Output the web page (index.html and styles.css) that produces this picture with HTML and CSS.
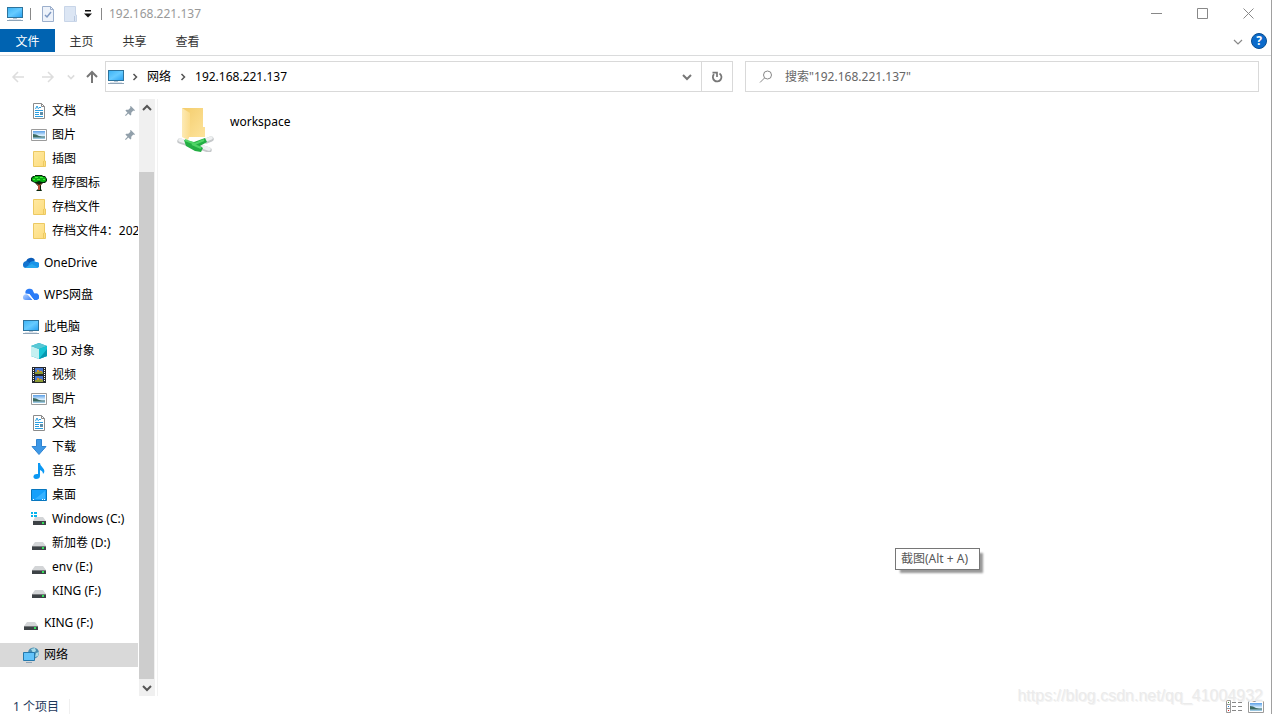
FILE: index.html
```html
<!DOCTYPE html>
<html lang="zh-CN">
<head>
<meta charset="utf-8">
<title>192.168.221.137</title>
<link rel="stylesheet" href="styles.css">
</head>
<body>
<svg class="sprite" aria-hidden="true">
  <defs>
    <linearGradient id="g-screen" x1="0" y1="0" x2="1" y2="1"><stop offset="0" stop-color="#3fb4f5"/><stop offset=".5" stop-color="#66cbff"/><stop offset="1" stop-color="#2ba3f2"/></linearGradient>
    <linearGradient id="g-folder" x1="0" y1="0" x2="1" y2="1"><stop offset="0" stop-color="#ffe9a2"/><stop offset="1" stop-color="#fddc7c"/></linearGradient>
    <linearGradient id="g-flap" x1="0" y1="0" x2="1" y2="0"><stop offset="0" stop-color="#fdeab5"/><stop offset="1" stop-color="#fbdc8c"/></linearGradient>
    <linearGradient id="g-back" x1="0" y1="0" x2="1" y2="1"><stop offset="0" stop-color="#f4cd6c"/><stop offset="1" stop-color="#fde39c"/></linearGradient>
    <linearGradient id="g-sky" x1="0" y1="0" x2="0" y2="1"><stop offset="0" stop-color="#5b9fe6"/><stop offset=".55" stop-color="#d9efff"/><stop offset="1" stop-color="#8fc0dc"/></linearGradient>
    <linearGradient id="g-wps" x1="0" y1="0" x2="1" y2="1"><stop offset="0" stop-color="#b5d3ff"/><stop offset="1" stop-color="#3d83f8"/></linearGradient>
  </defs>
  <symbol id="pc" viewBox="0 0 16 16"><path d="M0 1h16v11H0z" fill="#2d739c"/><path d="M1 2h14v9H1z" fill="url(#g-screen)"/><path d="M6 12h4v1H6z" fill="#b8c6d4"/><path d="M2 13h12v1H2z" fill="#dce4ec"/><path d="M0 14h16v1H0z" fill="#8fa4b8"/></symbol>
  <symbol id="folder" viewBox="0 0 16 16"><path d="M2.500.500h11V10h1v5.500h-12z" fill="url(#g-folder)" stroke="#ecc962"/><path d="M12.500 10v5.500" stroke="#ecc962" fill="none"/></symbol>
  <symbol id="doc" viewBox="0 0 16 16"><path d="M2.500.500h8l3 3v12h-11z" fill="#fff" stroke="#8b8b8b"/><path d="M10.500.500v3h3" fill="none" stroke="#8b8b8b"/><path d="M4.500 6l1.500-3 1.500 3M8 4.500h2M4 7.500h8M4 9.500h4M4 11.500h4M4 13.500h8" fill="none" stroke="#2a9ee0"/><path d="M9 9h3v3H9z" fill="#5d8da8"/></symbol>
  <symbol id="pic" viewBox="0 0 16 16"><path d="M.500 2.500h15v11H.500z" fill="#fff" stroke="#9b9b9b"/><path d="M2 4h12v8H2z" fill="url(#g-sky)"/><path d="M2 7q3 0 6 2 3 .500 6 .500v1H2z" fill="#3d6b62"/></symbol>
  <symbol id="pin" viewBox="0 0 12 12"><path d="M7 0l5 5-1 1-1-.500L7.500 8v2.500l-1 1L4 9l-3 3-1-1 3-3L.500 5.500l1-1H4L6.500 2 6 1z" fill="#92a0ab"/></symbol>
  <symbol id="tree" viewBox="0 0 16 16"><path d="M4 0h7l1 1h2l2 3v2l-2 2h-2l-2 2v4l1 2H5l2-2v-3L4 8 2 7 0 6V3l2-2h2z" fill="#06230a"/><path d="M4 1h7l1 1h2l1 2v2l-2 1h-2L8 6 5 7H3L1 5V3l2-1z" fill="#08ae14"/><path d="M4 2h3v1H4zM9 2h3v1H9zM6 4h3v1H6zM12 4h2v1h-2zM2 4h2v1H2z" fill="#4bea3c"/><path d="M5 8l3 2 3-2-2 3v4H7v-4z" fill="#b54a35"/></symbol>
  <symbol id="onedrive" viewBox="0 0 16 16"><path d="M3 7a5 5 0 0 1 9-2L8 10z" fill="#0a5cb8"/><path d="M0 10a3.500 3.500 0 0 1 5-3.500l6 6.500H3a3 3 0 0 1-3-3z" fill="#1374cf"/><path d="M6 9a4.500 4.500 0 0 1 7-2 3 3 0 0 1 1 6H4z" fill="#1893e8"/><path d="M2 12.500L9 9l6 3.500-1 .500H3z" fill="#29a8ee"/></symbol>
  <symbol id="wps" viewBox="0 0 16 16"><path d="M2.500 6.500a4 4 0 0 1 8-1.500l1 1.500a3.200 3.200 0 0 1 2.500 6.500h-3L6.500 7z" fill="#2a7cf7"/><path d="M0 10.500A3 3 0 0 1 5 8l4.500 5H2.500A2.500 2.500 0 0 1 0 10.500z" fill="url(#g-wps)"/><path d="M5.500 7l5.500 6.500" stroke="#fff"/></symbol>
  <symbol id="cube" viewBox="0 0 16 16"><path d="M8 0l8 3v10l-8 3-8-3V3z" fill="#14a5bd"/><path d="M0 3l8 3v10l-8-3z" fill="#c4f0f1"/><path d="M0 3l8-3 8 3-8 3z" fill="#58c8d5"/><path d="M8 6l8-3v10l-8 3z" fill="#17c4d4"/><path d="M8 16l8-10v7z" fill="#0798b0"/></symbol>
  <symbol id="video" viewBox="0 0 16 16"><path d="M1 0h14v16H1z" fill="#24282d"/><path d="M4 1h8v6H4zM4 9h8v6H4z" fill="#4a78d0"/><path d="M4 5h2l1-1h2l2 1h1v2H4zM4 13h2l1-1h2l2 1h1v2H4z" fill="#8c9a35"/><path d="M6 3h2v2H6zM9 4h2v1H9zM6 11h2v2H6zM9 12h2v1H9z" fill="#d99425"/><path d="M2.500 1v14M13.500 1v14" stroke="#fff" stroke-dasharray="1 1"/></symbol>
  <symbol id="down" viewBox="0 0 16 16"><path d="M5.500.500h5v7h4.500L8 15.500 1 7.500h4.500z" fill="#3e98e6" stroke="#2f84d2"/></symbol>
  <symbol id="music" viewBox="0 0 16 16"><path d="M7 0h2q0 2.500 2.500 4.500Q15 8 12 11q0-3-3-4v6q0 3-4 3-3-.500-2.500-3Q3 10.500 7 11z" fill="#0b98f3"/></symbol>
  <symbol id="desk" viewBox="0 0 16 16"><path d="M.500 2.500h15v11H.500z" fill="#16a0fb" stroke="#0876be"/><path d="M4 12L14 4v8z" fill="#37b2ff"/><path d="M2 12.500h1M11 12.500h1M13 12.500h1" stroke="#fff"/></symbol>
  <symbol id="drive" viewBox="0 0 16 16"><path d="M4 7h8l3 4H1z" fill="#d3d5d7"/><path d="M1 11h14v4H1z" fill="#3d4246"/><path d="M1 11h14v1H1z" fill="#76797c"/><path d="M11 12h2v2h-2z" fill="#32df58"/></symbol>
  <symbol id="windrive" viewBox="0 0 16 16"><path d="M4 6h8l3 4H2z" fill="#d3d5d7"/><path d="M2 10h13v4H2z" fill="#3d4246"/><path d="M11 11h2v2h-2z" fill="#32df58"/><path d="M0 1h2v2H0zM3 1h3v2H3zM0 4h2v2H0zM3 4h3v2H3z" fill="#06b4ed"/></symbol>
  <symbol id="net" viewBox="0 0 16 16"><circle cx="10.500" cy="6" r="5.500" fill="#4a8db0"/><path d="M8 2l4-1 1 3-3 2zM13 6l3-1-1 4-3 1z" fill="#a8dbe7"/><path d="M.500 5.500h11v8H.500z" fill="#62c3fa" stroke="#2478ac"/><path d="M3 15.500h6" stroke="#8fa4b8"/></symbol>
  <symbol id="chev-r" viewBox="0 0 8 8"><path d="M2.500 1l3 3-3 3" fill="none" stroke="currentColor" stroke-width="1.500"/></symbol>
  <symbol id="chev-d" viewBox="0 0 10 10"><path d="M1 3l4 4 4-4" fill="none" stroke="currentColor" stroke-width="2"/></symbol>
  <symbol id="chev-thin" viewBox="0 0 10 10"><path d="M1 3l4 4 4-4" fill="none" stroke="currentColor" stroke-width="1.200"/></symbol>
  <symbol id="arrow" viewBox="0 0 14 14"><path d="M13 7H2M7 2L2 7l5 5" fill="none" stroke="currentColor" stroke-width="1.500"/></symbol>
</svg>

<div class="window">
  <header class="titlebar">
    <svg class="icon"><use href="#pc"/></svg>
    <span class="divider"></span>
    <div class="quick">
      <button aria-label="属性"><svg class="icon" viewBox="0 0 16 16"><path d="M2.500.500h8l3 3v12h-11z" fill="#edf2fa" stroke="#9cafcc"/><path d="M10.500.500v3h3" fill="none" stroke="#9cafcc"/><path d="M5 9l2 2 4-5" fill="none" stroke="#7e98c2" stroke-width="1.500"/></svg></button>
      <button aria-label="新建文件夹"><svg class="icon" viewBox="0 0 16 16"><path d="M1.500.500h11V9h1v6.500h-12z" fill="#dce6f4" stroke="#c8d5e8"/><path d="M11.500 10v5" stroke="#b9c8df"/></svg></button>
    </div>
    <button class="customize" aria-label="自定义快速访问工具栏"><svg viewBox="0 0 8 8"><path d="M1 0h6v1.500H1zM0 3.500h8L4 7.500z" fill="#111"/></svg></button>
    <span class="divider"></span>
    <h1>192.168.221.137</h1>
    <div class="caption">
      <button aria-label="最小化"><svg viewBox="0 0 11 11"><path d="M0 5.500h11"/></svg></button>
      <button aria-label="最大化"><svg viewBox="0 0 11 11"><path d="M.500.500h10v10H.500z"/></svg></button>
      <button aria-label="关闭"><svg viewBox="0 0 11 11"><path d="M.500.500l10 10M10.500.500l-10 10"/></svg></button>
    </div>
  </header>

  <nav class="tabs">
    <button class="file">文件</button><button>主页</button><button>共享</button><button>查看</button>
    <button class="expand" aria-label="展开功能区"><svg><use href="#chev-thin"/></svg></button>
    <button class="help" aria-label="帮助">?</button>
  </nav>

  <div class="toolbar">
    <div class="history">
      <button aria-label="后退"><svg class="arrow"><use href="#arrow"/></svg></button>
      <button aria-label="前进"><svg class="arrow forward"><use href="#arrow"/></svg></button>
      <button class="recent" aria-label="最近位置"><svg class="small"><use href="#chev-d"/></svg></button>
      <button class="up" aria-label="向上"><svg class="arrow upward" viewBox="0 0 14 14"><path d="M13 7H2M7 2L2 7l5 5" fill="none" stroke="currentColor" stroke-width="2"/></svg></button>
    </div>
    <div class="address">
      <svg class="icon"><use href="#pc"/></svg>
      <svg class="sep"><use href="#chev-r"/></svg>
      <a href="#network">网络</a>
      <svg class="sep wide"><use href="#chev-r"/></svg>
      <a href="#host">192.168.221.137</a>
      <button class="history-list" aria-label="以前的位置"><svg><use href="#chev-d"/></svg></button>
      <button class="refresh" aria-label="刷新"><svg viewBox="0 0 12 12"><path d="M8.500 2.500A4.300 4.300 0 1 1 3 3.200" fill="none" stroke="currentColor" stroke-width="1.800"/><path d="M1.500 1.700H6V6" fill="none" stroke="currentColor" stroke-width="1.700"/></svg></button>
    </div>
    <label class="search">
      <svg viewBox="0 0 14 14"><circle cx="8.500" cy="5" r="4"/><path d="M5.500 8L1 12.500"/></svg>
      <input type="search" aria-label="搜索" placeholder='搜索"192.168.221.137"'>
    </label>
  </div>

  <div class="body">
    <aside class="sidebar">
      <nav class="tree">
        <ul>
          <li><a class="child" href="#docs"><svg class="icon"><use href="#doc"/></svg><span>文档</span><svg class="pin"><use href="#pin"/></svg></a></li>
          <li><a class="child" href="#pics"><svg class="icon"><use href="#pic"/></svg><span>图片</span><svg class="pin"><use href="#pin"/></svg></a></li>
          <li><a class="child" href="#art"><svg class="icon"><use href="#folder"/></svg><span>插图</span></a></li>
          <li><a class="child" href="#icons"><svg class="icon"><use href="#tree"/></svg><span>程序图标</span></a></li>
          <li><a class="child" href="#archive"><svg class="icon"><use href="#folder"/></svg><span>存档文件</span></a></li>
          <li><a class="child" href="#archive4"><svg class="icon"><use href="#folder"/></svg><span>存档文件4：202</span></a></li>
        </ul>
        <ul><li><a href="#onedrive-root"><svg class="icon"><use href="#onedrive"/></svg><span>OneDrive</span></a></li></ul>
        <ul><li><a href="#wps-root"><svg class="icon"><use href="#wps"/></svg><span>WPS网盘</span></a></li></ul>
        <ul>
          <li><a href="#this-pc"><svg class="icon"><use href="#pc"/></svg><span>此电脑</span></a></li>
          <li><a class="child" href="#objects"><svg class="icon"><use href="#cube"/></svg><span>3D 对象</span></a></li>
          <li><a class="child" href="#videos"><svg class="icon"><use href="#video"/></svg><span>视频</span></a></li>
          <li><a class="child" href="#pictures"><svg class="icon"><use href="#pic"/></svg><span>图片</span></a></li>
          <li><a class="child" href="#documents"><svg class="icon"><use href="#doc"/></svg><span>文档</span></a></li>
          <li><a class="child" href="#downloads"><svg class="icon"><use href="#down"/></svg><span>下载</span></a></li>
          <li><a class="child" href="#music-dir"><svg class="icon"><use href="#music"/></svg><span>音乐</span></a></li>
          <li><a class="child" href="#desktop"><svg class="icon"><use href="#desk"/></svg><span>桌面</span></a></li>
          <li><a class="child" href="#c"><svg class="icon"><use href="#windrive"/></svg><span>Windows (C:)</span></a></li>
          <li><a class="child" href="#d"><svg class="icon"><use href="#drive"/></svg><span>新加卷 (D:)</span></a></li>
          <li><a class="child" href="#e"><svg class="icon"><use href="#drive"/></svg><span>env (E:)</span></a></li>
          <li><a class="child" href="#f"><svg class="icon"><use href="#drive"/></svg><span>KING (F:)</span></a></li>
        </ul>
        <ul><li><a href="#f-root"><svg class="icon"><use href="#drive"/></svg><span>KING (F:)</span></a></li></ul>
        <ul><li><a class="selected" href="#network"><svg class="icon"><use href="#net"/></svg><span>网络</span></a></li></ul>
      </nav>
      <div class="scrollbar">
        <button aria-label="向上滚动"><svg class="flip"><use href="#chev-d"/></svg></button>
        <div class="track"><div class="thumb"></div></div>
        <button aria-label="向下滚动"><svg><use href="#chev-d"/></svg></button>
      </div>
    </aside>
    <main class="content">
      <a class="item" href="#workspace">
        <svg viewBox="0 0 48 48">
          <path d="M10 4h21v19h2v10H16z" fill="url(#g-back)"/>
          <path d="M10 4l8 5v22l-2 5-6-3z" fill="url(#g-flap)"/>
          <path d="M8 37l6 2M39 35l-5 2M37 46l-6-2" stroke="#c5c8ca" stroke-width="5.500" stroke-linecap="round"/>
          <path d="M8 36l6 2M39 34l-5 2M37 45l-6-2" stroke="#eef0f1" stroke-width="3.500" stroke-linecap="round"/>
          <path d="M12 36l10 2 11-4 2 4-7 4 3 2-2 4-6-1-9-5z" fill="#23ae43"/>
          <path d="M13 36l10 4 9-4M20 40l9 4" fill="none" stroke="#4fd466" stroke-width="2"/>
        </svg>
        <span>workspace</span>
      </a>
    </main>
  </div>

  <footer class="status">
    <span class="count">1 个项目</span>
    <div class="views">
      <button aria-label="详细信息"><svg class="icon" viewBox="0 0 16 16"><path d="M.500 1.500h4v12h-4zM.500 5.500h4M.500 9.500h4" fill="#fff" stroke="#999"/><path d="M2 3h1v1H2z" fill="#3d8b37"/><path d="M2 7h1v1H2z" fill="#1683e6"/><path d="M2 11h1v1H2z" fill="#d22"/><path d="M6 3.500h4M12 3.500h4M6 7.500h4M12 7.500h4M6 11.500h4M12 11.500h4" stroke="#888"/></svg></button>
      <button aria-label="大缩略图"><svg class="icon"><use href="#pic"/></svg></button>
    </div>
  </footer>
  <div class="tooltip" role="tooltip">截图(Alt + A)</div>
  <div class="watermark">https://blog.csdn.net/qq_41004932</div>
</div>
</body>
</html>
```
FILE: styles.css
```css
* { box-sizing: border-box; }

body {
  margin: 0;
  background: #fff;
  color: #000;
  font: 12px/16px "Noto Sans", "Noto Sans CJK SC", sans-serif;
}

button {
  display: flex;
  align-items: center;
  justify-content: center;
  margin: 0;
  padding: 0;
  border: 0;
  background: none;
  color: inherit;
  font: inherit;
}

a { color: inherit; text-decoration: none; }
ul { margin: 0; padding: 0; list-style: none; }
svg { display: block; flex: none; }
.sprite { position: absolute; width: 0; height: 0; }
.icon { width: 16px; height: 16px; }

.window {
  position: relative;
  display: flex;
  flex-direction: column;
  height: 100vh;
  overflow: hidden;
  border-right: 1px solid #a0a0a0;
}

/* Title bar */
.titlebar {
  display: flex;
  flex: none;
  align-items: center;
  height: 28px;
  padding-left: 7px;
}
.divider { width: 1px; height: 12px; margin: 0 7px; background: #888; }
.quick { display: flex; gap: 7px; padding-left: 2px; }
.customize { width: 18px; height: 20px; margin-right: -3px; }
.customize svg { width: 8px; height: 8px; }
.titlebar h1 { margin: 0; color: #999; font: inherit; }
.caption { display: flex; align-self: stretch; margin-left: auto; }
.caption button { width: 46px; padding-bottom: 2px; }
.caption svg { width: 11px; height: 11px; fill: none; stroke: #888; }

/* Ribbon tabs */
.tabs {
  display: flex;
  flex: none;
  height: 28px;
  padding: 1px 4px 3px 0;
  border-bottom: 1px solid #dadbdc;
  color: #333;
}
.tabs button { width: 53px; padding-top: 2px; }
.tabs .file { width: 55px; background: #0063b1; color: #fff; }
.tabs .expand { width: 20px; margin-left: auto; color: #888; }
.expand svg { width: 10px; height: 10px; }
.tabs .help {
  align-self: center;
  width: 16px;
  height: 16px;
  margin-left: 3px;
  padding: 0;
  border: 1px solid #084d91;
  border-radius: 50%;
  background: #0c6bcb;
  color: #fff;
  font-weight: 700;
}

/* Navigation row */
.toolbar {
  display: grid;
  flex: none;
  grid-template-columns: 105px 628fr 526fr;
  padding: 5px 12px 7px 0;
}
.history { display: flex; align-items: center; padding-left: 11px; color: #ddd; }
.history button { width: 14px; margin-right: 16px; }
.history .recent { width: 8px; margin: 0 10px 0 -9px; }
.history button:nth-child(2) { margin-right: 21px; }
.history .up { margin: 0; color: #777; }
.arrow { width: 14px; height: 14px; }
.forward { transform: rotate(180deg); }
.upward { transform: rotate(90deg); }
.small { width: 8px; height: 8px; }
.address {
  display: flex;
  align-items: center;
  height: 31px;
  padding-left: 2px;
  border: 1px solid #d9d9d9;
}
.sep { width: 8px; height: 8px; margin: 0 8px 0 7px; color: #555; }
.sep.wide { margin: 0 8px; }
.history-list { width: 28px; margin-left: auto; color: #777; }
.history-list svg { width: 10px; height: 10px; }
.refresh { align-self: stretch; width: 31px; border-left: 1px solid #d9d9d9; color: #777; }
.refresh svg { width: 12px; height: 12px; }
.search {
  display: flex;
  align-items: center;
  gap: 12px;
  height: 31px;
  margin-left: 12px;
  padding: 0 13px;
  border: 1px solid #d9d9d9;
}
.search svg { width: 14px; height: 14px; fill: none; stroke: #888; }
.search input {
  flex: 1;
  min-width: 0;
  padding: 0;
  border: 0;
  outline: 0;
  background: none;
  color: #666;
  font: inherit;
}
.search input::placeholder { color: #666; opacity: 1; }

/* Folder tree and content */
.body { display: flex; flex: 1; min-height: 0; }
.sidebar {
  display: flex;
  flex: none;
  width: 158px;
  padding-right: 2px;
  border-right: 1px solid #f2f2f2;
}
.tree { flex: 1; min-width: 0; overflow: hidden; }
.tree ul + ul { margin-top: 8px; }
.tree a {
  display: flex;
  align-items: center;
  gap: 5px;
  height: 24px;
  margin-right: 1px;
  padding-left: 23px;
  overflow: hidden;
  white-space: nowrap;
}
.tree .child { padding-left: 31px; }
.tree .selected { background: #d9d9d9; }
.pin { width: 10px; height: 10px; margin: 0 3px 0 auto; }
.scrollbar { display: flex; flex: none; flex-direction: column; width: 16px; background: #f0f0f0; }
.scrollbar button { height: 17px; padding-right: 1px; color: #555; }
.scrollbar svg { width: 10px; height: 10px; }
.scrollbar .flip { transform: rotate(180deg); }
.track { display: flex; flex: 1; flex-direction: column; justify-content: flex-end; }
.thumb { width: 15px; height: 90%; background: #cdcdcd; }
.content { flex: 1; padding: 5px 14px; }
.item { display: inline-flex; gap: 10px; }
.item svg { width: 48px; height: 48px; }
.item span { padding-top: 10px; }

/* Status bar */
.status {
  display: flex;
  flex: none;
  align-items: center;
  justify-content: space-between;
  height: 18px;
  padding: 4px 7px 0 13px;
  color: #1e395b;
}
.count { padding-right: 10px; border-right: 1px solid #f0f0f0; }
.views { display: flex; gap: 6px; }

.tooltip {
  position: absolute;
  top: 548px;
  left: 895px;
  min-width: 85px;
  padding: 2px 5px;
  border: 1px solid #767676;
  background: #fff;
  box-shadow: 4px 4px 2px -1px #999;
  color: #575757;
  white-space: nowrap;
}
.watermark {
  position: absolute;
  right: 8px;
  bottom: 9px;
  color: #ebebeb;
  font: 16px/18px "Liberation Sans", Arial, sans-serif;
  text-shadow: 1px 1px 0 #f3f3f3;
  pointer-events: none;
}
```
